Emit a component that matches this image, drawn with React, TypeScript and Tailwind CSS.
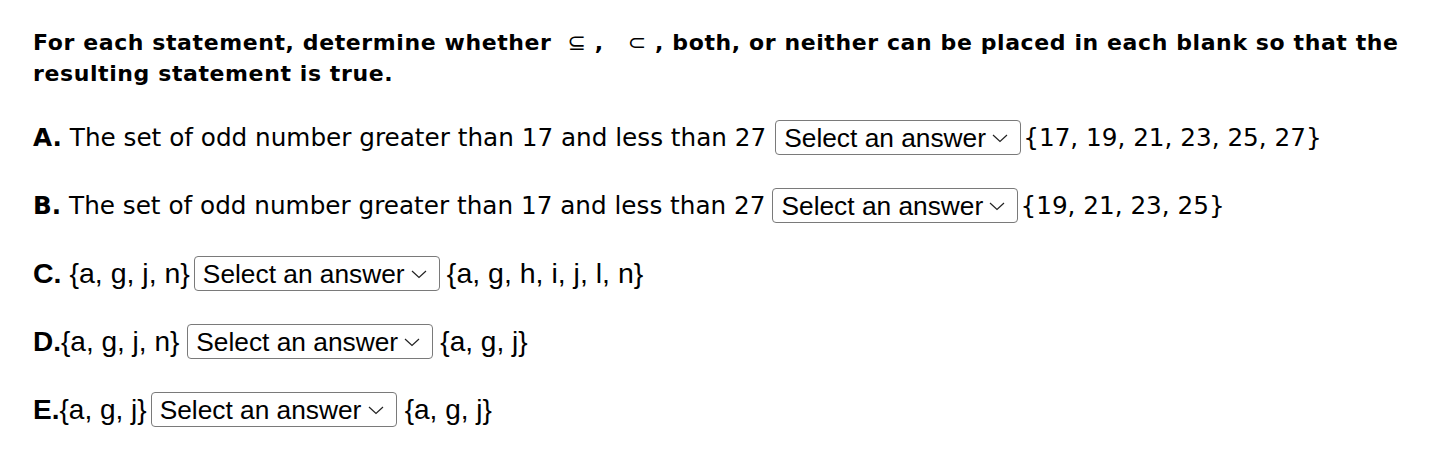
import React from 'react';

function Chevron() {
  return (
    <svg className="pointer-events-none absolute right-[13px] top-1/2 -translate-y-1/2" width="16" height="10" viewBox="0 0 16 10" fill="none">
      <path d="M1 2L8 8.5L15 2" stroke="#222" strokeWidth="1.2" />
    </svg>
  );
}

function AnswerSelect({ className }: { className: string }) {
  return (
    <span className={`relative inline-flex h-[35px] w-[246px] shrink-0 ${className}`}>
      <select
        defaultValue=""
        className="h-full w-full appearance-none rounded-[4px] border border-[#7a7a7a] bg-white pl-[8px] pr-[30px] font-['Liberation_Sans',Arial,sans-serif] text-[26.3px] leading-[32px] text-black outline-none"
      >
        <option value="" disabled>Select an answer</option>
        <option value="subset">⊆</option>
        <option value="proper">⊂</option>
        <option value="both">both</option>
        <option value="neither">neither</option>
      </select>
      <Chevron />
    </span>
  );
}

const verdana = "font-['DejaVu_Sans',Verdana,sans-serif]";
const arial = "font-['Liberation_Sans',Arial,sans-serif]";

export default function App() {
  return (
    <div className="h-[449px] w-[1446px] bg-white px-[33px] pt-[27px] text-black">
      <p className={`${verdana} text-[22px] font-bold leading-[31px] tracking-[0.6px]`}>
        For each statement, determine whether
        <span className="ml-[16px] font-normal">⊆</span> ,
        <span className="ml-[24px] font-normal">⊂</span> , both, or neither can be placed in each blank so that the resulting statement is true.
      </p>

      <div className="mt-[31px] flex flex-col gap-[33px]">
        <div className={`flex h-[35px] items-center ${verdana} text-[24.7px]`}>
          <span><b>A.</b> The set of odd number greater than 17 and less than 27</span>
          <AnswerSelect className="ml-[9px] mr-[2px]" />
          <span>{'{17, 19, 21, 23, 25, 27}'}</span>
        </div>
        <div className={`flex h-[35px] items-center ${verdana} text-[24.7px]`}>
          <span><b>B.</b> The set of odd number greater than 17 and less than 27</span>
          <AnswerSelect className="ml-[7px] mr-[2px]" />
          <span>{'{19, 21, 23, 25}'}</span>
        </div>
        <div className={`flex h-[35px] items-center ${arial} text-[28.5px]`}>
          <span><b>C.</b> {'{a, g, j, n}'}</span>
          <AnswerSelect className="ml-[4px] mr-[7px]" />
          <span>{'{a, g, h, i, j, l, n}'}</span>
        </div>
        <div className={`flex h-[35px] items-center ${arial} text-[28px]`}>
          <span><b>D.</b>{'{a, g, j, n}'}</span>
          <AnswerSelect className="ml-[8px] mr-[7px]" />
          <span>{'{a, g, j}'}</span>
        </div>
        <div className={`flex h-[35px] items-center ${arial} text-[28px]`}>
          <span><b>E.</b>{'{a, g, j}'}</span>
          <AnswerSelect className="ml-[4px] mr-[8px]" />
          <span>{'{a, g, j}'}</span>
        </div>
      </div>
    </div>
  );
}
